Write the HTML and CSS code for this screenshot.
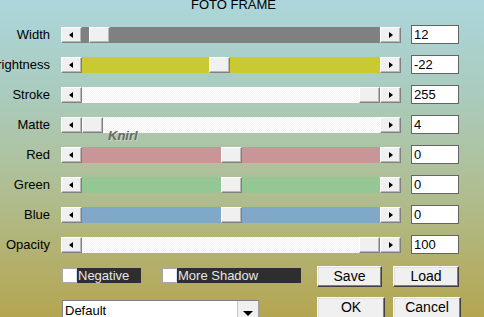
FILE: index.html
```html
<!DOCTYPE html>
<html>
<head>
<meta charset="utf-8">
<link rel="stylesheet" href="styles.css">
</head>
<body>
<div class="dialog">
  <div class="title">FOTO FRAME</div>
  <div class="rows">
    <div class="row">
      <div class="label">Width</div>
      <div class="scroll">
        <div class="sbtn"><span class="arr-l"></span></div>
        <div class="track t-gray"><div class="thumb" style="left:7px"></div></div>
        <div class="sbtn"><span class="arr-r"></span></div>
      </div>
      <div class="value">12</div>
    </div>
    <div class="row">
      <div class="label">Brightness</div>
      <div class="scroll">
        <div class="sbtn"><span class="arr-l"></span></div>
        <div class="track t-yellow"><div class="thumb" style="left:127px"></div></div>
        <div class="sbtn"><span class="arr-r"></span></div>
      </div>
      <div class="value">-22</div>
    </div>
    <div class="row">
      <div class="label">Stroke</div>
      <div class="scroll">
        <div class="sbtn"><span class="arr-l"></span></div>
        <div class="track t-white"><div class="thumb" style="left:277px"></div></div>
        <div class="sbtn"><span class="arr-r"></span></div>
      </div>
      <div class="value">255</div>
    </div>
    <div class="row">
      <div class="label">Matte</div>
      <div class="scroll">
        <div class="sbtn"><span class="arr-l"></span></div>
        <div class="track t-white"><div class="thumb" style="left:0px"></div></div>
        <div class="sbtn"><span class="arr-r"></span></div>
      </div>
      <div class="value">4</div>
    </div>
    <div class="row">
      <div class="label">Red</div>
      <div class="scroll">
        <div class="sbtn"><span class="arr-l"></span></div>
        <div class="track t-red"><div class="thumb" style="left:139px"></div></div>
        <div class="sbtn"><span class="arr-r"></span></div>
      </div>
      <div class="value">0</div>
    </div>
    <div class="row">
      <div class="label">Green</div>
      <div class="scroll">
        <div class="sbtn"><span class="arr-l"></span></div>
        <div class="track t-green"><div class="thumb" style="left:139px"></div></div>
        <div class="sbtn"><span class="arr-r"></span></div>
      </div>
      <div class="value">0</div>
    </div>
    <div class="row">
      <div class="label">Blue</div>
      <div class="scroll">
        <div class="sbtn"><span class="arr-l"></span></div>
        <div class="track t-blue"><div class="thumb" style="left:139px"></div></div>
        <div class="sbtn"><span class="arr-r"></span></div>
      </div>
      <div class="value">0</div>
    </div>
    <div class="row">
      <div class="label">Opacity</div>
      <div class="scroll">
        <div class="sbtn"><span class="arr-l"></span></div>
        <div class="track t-white"><div class="thumb" style="left:277px"></div></div>
        <div class="sbtn"><span class="arr-r"></span></div>
      </div>
      <div class="value">100</div>
    </div>
  </div>
  <div class="bottom">
    <div class="left">
      <div class="checks">
        <div class="check"><span class="box"></span><span class="ctext c-neg">Negative</span></div>
        <div class="check"><span class="box"></span><span class="ctext c-shadow">More Shadow</span></div>
      </div>
      <div class="select"><span class="stext">Default</span><span class="sarrow"><span class="arr-d"></span></span></div>
    </div>
    <div class="buttons">
      <div class="btn b-save">Save</div>
      <div class="btn b-load">Load</div>
      <div class="btn b-ok">OK</div>
      <div class="btn b-cancel">Cancel</div>
    </div>
  </div>
  <div class="watermark">Knirl</div>
</div>
</body>
</html>
```
FILE: styles.css
```css
html, body {
  margin: 0;
  padding: 0;
  width: 484px;
  height: 317px;
  overflow: hidden;
}
body {
  background: linear-gradient(#acd6dc 0%, #aacbbd 30%, #afbe92 60%, #b3ae68 85%, #b4a650 100%);
  font-family: "Liberation Sans", Arial, sans-serif;
  font-size: 13px;
  color: #000;
}
.dialog {
  position: relative;
  height: 317px;
}
.title {
  margin-top: -3px;
  height: 28px;
  line-height: 15px;
  padding-left: 191px;
  white-space: nowrap;
}
.rows {
  display: flex;
  flex-direction: column;
  gap: 11px;
}
.row {
  display: flex;
  align-items: center;
  height: 19px;
}
.label {
  width: 50px;
  margin-right: 11px;
  display: flex;
  justify-content: flex-end;
  white-space: nowrap;
}
.scroll {
  display: flex;
  width: 340px;
  height: 16px;
}
.sbtn, .thumb {
  box-sizing: border-box;
  width: 21px;
  height: 16px;
  background: #f0f0f0;
  border: 1px solid;
  border-color: #ffffff #808080 #808080 #ffffff;
  box-shadow: inset -1px -1px 0 #b8b8b8;
}
.sbtn {
  display: flex;
  align-items: center;
  justify-content: center;
}
.arr-l, .arr-r, .arr-d {
  display: block;
  width: 0;
  height: 0;
  border-style: solid;
}
.arr-l {
  border-width: 3.5px 4px 3.5px 0;
  border-color: transparent #000 transparent transparent;
  margin-left: -2px;
}
.arr-r {
  border-width: 3.5px 0 3.5px 4px;
  border-color: transparent transparent transparent #000;
}
.track {
  position: relative;
  flex: 1;
}
.thumb {
  position: absolute;
  top: 0;
}
.t-gray { background: #808080; }
.t-yellow { background: #c9c932; }
.t-red { background: #c99597; }
.t-green { background: #95c795; }
.t-blue { background: #7fa8c9; }
.t-white {
  background: repeating-conic-gradient(#ffffff 0 25%, #f2f2f2 0 50%) 0 0 / 2px 2px;
}
.value {
  box-sizing: border-box;
  margin-left: 10px;
  width: 48px;
  height: 19px;
  background: #fff;
  border: 1px solid #646464;
  padding-left: 2px;
  line-height: 17px;
  font-size: 13px;
}
.bottom {
  display: flex;
  margin-top: 12px;
}
.left {
  margin-left: 62px;
  width: 255px;
  padding-top: 2px;
}
.checks {
  display: flex;
  gap: 21px;
  height: 15px;
}
.check {
  display: flex;
  height: 15px;
}
.box {
  box-sizing: border-box;
  width: 15px;
  height: 15px;
  background: #fff;
  border: 1px solid #a8a8a8;
  border-right-color: #e0e0e0;
}
.ctext {
  background: #2e2e2e;
  color: #e6e6e6;
  line-height: 15px;
  white-space: nowrap;
  padding-left: 1px;
}
.c-neg { width: 63px; }
.c-shadow { width: 123px; }
.select {
  box-sizing: border-box;
  margin-top: 17px;
  width: 198px;
  height: 21px;
  background: #fff;
  border: 1px solid #808080;
  border-right: 2px solid #a0a0a0;
  display: flex;
  justify-content: space-between;
}
.stext {
  padding-left: 2px;
  line-height: 19px;
}
.sarrow {
  box-sizing: border-box;
  width: 21px;
  background: #f0f0f0;
  border-left: 1px solid #c8c8c8;
  display: flex;
  justify-content: center;
  padding-top: 10px;
}
.arr-d {
  border-width: 5px 5px 0 5px;
  border-color: #000 transparent transparent transparent;
}
.buttons {
  display: grid;
  grid-template-columns: 76px 68px;
  row-gap: 9px;
}
.btn {
  box-sizing: border-box;
  height: 21px;
  background: #f0f0f0;
  border: 1px solid;
  border-color: #ffffff #404040 #404040 #ffffff;
  box-shadow: inset -1px -1px 0 #808080, inset 1px 1px 0 #e0e0e0;
  text-align: center;
  line-height: 19px;
  font-size: 14px;
}
.b-save { width: 65px; }
.b-load { width: 66px; }
.b-ok { width: 68px; height: 24px; }
.b-cancel { width: 68px; height: 24px; }
.watermark {
  position: absolute;
  left: 108px;
  top: 131px;
  font-weight: bold;
  font-style: italic;
  font-size: 13px;
  color: #6a6a6a;
  text-shadow: 1px 1px 0 rgba(255,255,255,0.3);
}
```
